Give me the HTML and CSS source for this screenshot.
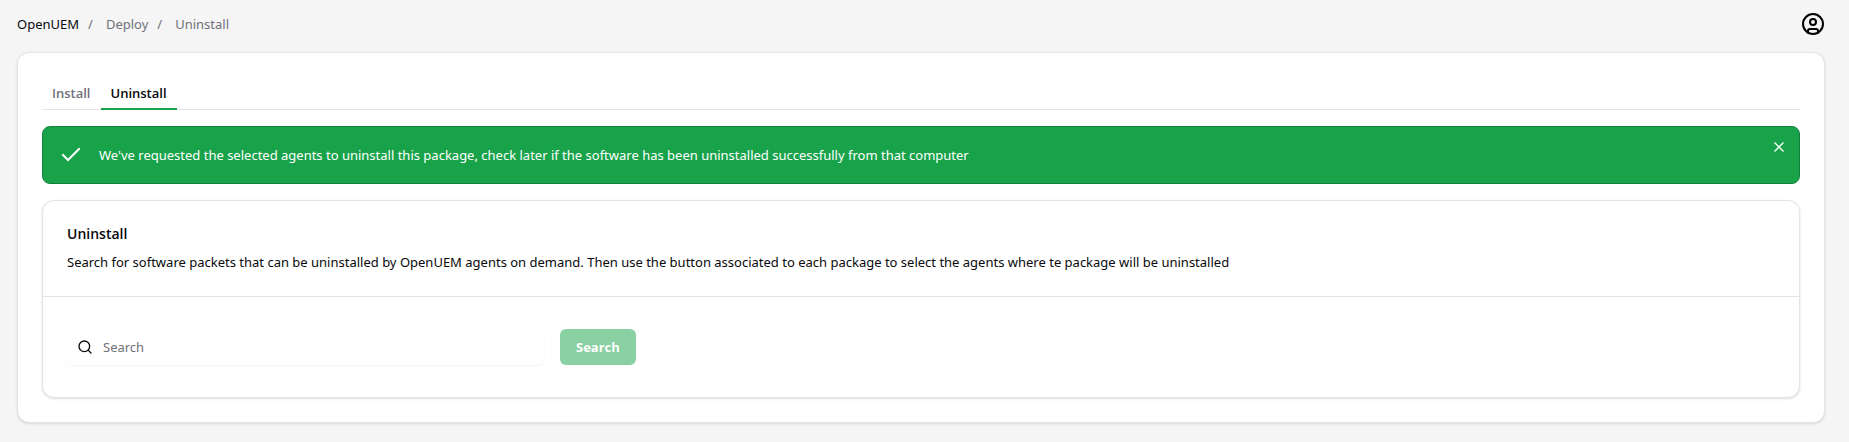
FILE: index.html
```html
<!DOCTYPE html>
<html lang="en">
<head>
<meta charset="utf-8">
<title>OpenUEM | Uninstall</title>
<meta name="viewport" content="width=device-width, initial-scale=1">
<link rel="stylesheet" href="styles.css">
</head>
<body>
<header class="topbar">
  <nav aria-label="Breadcrumb">
    <ol class="breadcrumb">
      <li><a class="home" href="#">OpenUEM</a></li>
      <li><a href="#">Deploy</a></li>
      <li><a href="#">Uninstall</a></li>
    </ol>
  </nav>
  <button class="account" type="button" aria-label="Account">
    <svg viewBox="0 0 24 24" width="24" height="24" fill="none" stroke="currentColor" stroke-width="2" stroke-linecap="round" stroke-linejoin="round"><circle cx="12" cy="12" r="10"/><circle cx="12" cy="10" r="3"/><path d="M7 20.662V19a2 2 0 0 1 2-2h6a2 2 0 0 1 2 2v1.662"/></svg>
  </button>
</header>
<main class="card page">
  <nav class="tabs" aria-label="Deploy">
    <a class="tab" href="#">Install</a>
    <a class="tab active" href="#" aria-current="page">Uninstall</a>
  </nav>
  <div class="alert" role="status">
    <svg class="check" viewBox="0 0 24 24" width="24" height="24" fill="none" stroke="currentColor" stroke-width="2" stroke-linecap="square"><path d="m4 12 5 5L20 6"/></svg>
    <p>We've requested the selected agents to uninstall this package, check later if the software has been uninstalled successfully from that computer</p>
    <button class="close" type="button" aria-label="Close">
      <svg viewBox="0 0 16 16" width="16" height="16" fill="none" stroke="currentColor" stroke-width="1.3"><path d="m3.5 3.5 9 9m0-9-9 9"/></svg>
    </button>
  </div>
  <section class="card">
    <div class="card-header">
      <h1>Uninstall</h1>
      <p>Search for software packets that can be uninstalled by OpenUEM agents on demand. Then use the button associated to each package to select the agents where te package will be uninstalled</p>
    </div>
    <form class="search">
      <label class="field">
        <svg viewBox="0 0 24 24" width="16" height="16" fill="none" stroke="currentColor" stroke-width="2" stroke-linecap="round"><circle cx="11" cy="11" r="8"/><path d="m21 21-4.3-4.3"/></svg>
        <input type="text" placeholder="Search" aria-label="Search">
      </label>
      <button class="submit" type="submit" disabled>Search</button>
    </form>
  </section>
</main>
</body>
</html>
```
FILE: styles.css
```css
* { box-sizing: border-box; margin: 0; padding: 0; }
body {
  min-height: 100vh;
  padding: 0 24px 20px 17px;
  background: #f5f5f5;
  color: #09090b;
  font: 13px/20px "Noto Sans", sans-serif;
}
a { color: inherit; text-decoration: none; }
button, input { font: inherit; border: 0; background: none; color: inherit; }
svg { display: block; flex: none; }
.topbar { display: flex; align-items: center; justify-content: space-between; height: 48px; margin-bottom: 4px; }
.breadcrumb { display: flex; list-style: none; color: #71717a; }
.breadcrumb .home { color: #09090b; }
.breadcrumb li + li::before { content: "/"; margin: 0 13px 0 9px; }
.account { color: #000; }
.card { background: #fff; border: 1px solid #e4e4e7; border-radius: 12px; box-shadow: 0 1px 3px rgb(0 0 0 / 10%), 0 1px 2px -1px rgb(0 0 0 / 10%); }
.page { display: flex; flex-direction: column; gap: 16px; padding: 24px; }
.tabs { display: flex; border-bottom: 1px solid #e4e4e7; }
.tab { padding: 6px 10px 5px; margin-bottom: -1px; border-bottom: 2px solid transparent; color: #71717a; font-family: "Open Sans", sans-serif; font-weight: 600; }
.active { color: #09090b; border-color: #16a34a; }
.alert { display: flex; align-items: center; gap: 16px; padding: 12px 12px 12px 16px; min-height: 58px; border: 1px solid #15803d; border-radius: 8px; background: #18a34a; color: #fff; }
.alert p { flex: 1; }
.close { align-self: flex-start; cursor: pointer; }
.card-header { padding: 24px; border-bottom: 1px solid #e4e4e7; }
h1 { font: 600 14px/17px "Open Sans", sans-serif; margin-bottom: 10px; }
.search { display: flex; gap: 16px; padding: 32px 24px; }
.field { display: flex; align-items: center; gap: 10px; width: 477px; height: 36px; padding: 0 10px; border-radius: 6px; box-shadow: 0 1px 2px rgb(0 0 0 / 5%); }
.field input { flex: 1; min-width: 0; outline: 0; }
.field input::placeholder { color: #71717a; opacity: 1; }
.submit { height: 36px; padding: 0 16px; border-radius: 6px; background: #16a34a; color: #fff; font-family: "Open Sans", sans-serif; font-weight: 700; opacity: .5; }
```
